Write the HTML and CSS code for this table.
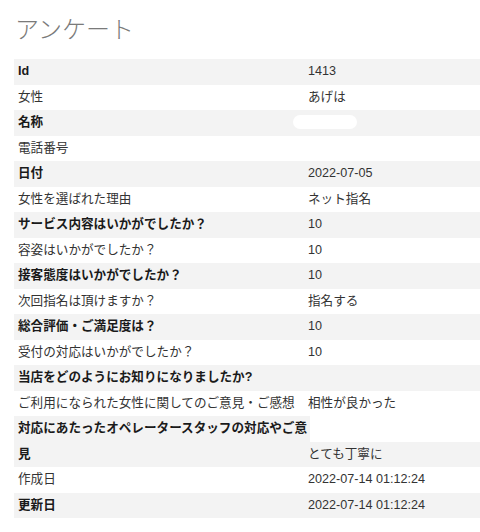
FILE: index.html
```html
<!DOCTYPE html>
<html lang="ja">
<head>
<meta charset="utf-8">
<title>アンケート</title>
<link rel="stylesheet" href="styles.css">
</head>
<body>
<main class="page">
  <h1 class="title">アンケート</h1>
  <div class="table">
    <div class="row"><div class="k">Id</div><div class="v">1413</div></div>
    <div class="row"><div class="k">女性</div><div class="v">あげは</div></div>
    <div class="row"><div class="k">名称</div><div class="v"><span class="mask"></span></div></div>
    <div class="row"><div class="k">電話番号</div><div class="v"></div></div>
    <div class="row"><div class="k">日付</div><div class="v">2022-07-05</div></div>
    <div class="row"><div class="k">女性を選ばれた理由</div><div class="v">ネット指名</div></div>
    <div class="row"><div class="k">サービス内容はいかがでしたか？</div><div class="v">10</div></div>
    <div class="row"><div class="k">容姿はいかがでしたか？</div><div class="v">10</div></div>
    <div class="row"><div class="k">接客態度はいかがでしたか？</div><div class="v">10</div></div>
    <div class="row"><div class="k">次回指名は頂けますか？</div><div class="v">指名する</div></div>
    <div class="row"><div class="k">総合評価・ご満足度は？</div><div class="v">10</div></div>
    <div class="row"><div class="k">受付の対応はいかがでしたか？</div><div class="v">10</div></div>
    <div class="row"><div class="k">当店をどのようにお知りになりましたか?</div><div class="v"></div></div>
    <div class="row"><div class="k">ご利用になられた女性に関してのご意見・ご感想</div><div class="v">相性が良かった</div></div>
    <div class="row wrap"><div class="k">対応にあたったオペレータースタッフの対応やご意見</div><div class="v">とても丁寧に</div></div>
    <div class="row"><div class="k">作成日</div><div class="v">2022-07-14 01:12:24</div></div>
    <div class="row"><div class="k">更新日</div><div class="v">2022-07-14 01:12:24</div></div>
  </div>
</main>
</body>
</html>
```

FILE: styles.css
```css
html, body {
  margin: 0;
  padding: 0;
  background: #ffffff;
}

.page {
  padding: 16px 0 0 14px;
  font-family: "Liberation Sans", "Noto Sans CJK JP", sans-serif;
  font-size: 12.6px;
  color: #333333;
}

.title {
  margin: 0 0 19px 1px;
  font-family: "Noto Sans CJK JP", sans-serif;
  font-size: 24px;
  line-height: 24px;
  font-weight: 300;
  color: #7a7a7a;
}

.table {
  display: flex;
  flex-direction: column;
}

.row {
  display: grid;
  grid-template-columns: 290px 1fr;
  line-height: 25.5px;
}

.row:nth-child(odd) {
  background: #f3f3f3;
}

.row:nth-child(odd) .k {
  font-weight: 700;
  color: #1a1a1a;
}

.k {
  padding-left: 4px;
  white-space: nowrap;
}

.v {
  padding-left: 4px;
  color: #333333;
}

.mask {
  display: inline-block;
  vertical-align: middle;
  width: 64px;
  height: 14px;
  margin-left: -15px;
  margin-top: -2px;
  border-radius: 7px;
  background: #ffffff;
}

.row.wrap {
  background: none;
  grid-template-rows: 25.5px 25.5px;
}

.row.wrap .k {
  grid-column: 1;
  grid-row: 1 / 3;
  margin-right: -6px;
  white-space: normal;
  background: #f3f3f3;
  font-weight: 700;
  color: #1a1a1a;
}

.row.wrap .v {
  grid-column: 2;
  grid-row: 2;
  background: #f3f3f3;
}
```
